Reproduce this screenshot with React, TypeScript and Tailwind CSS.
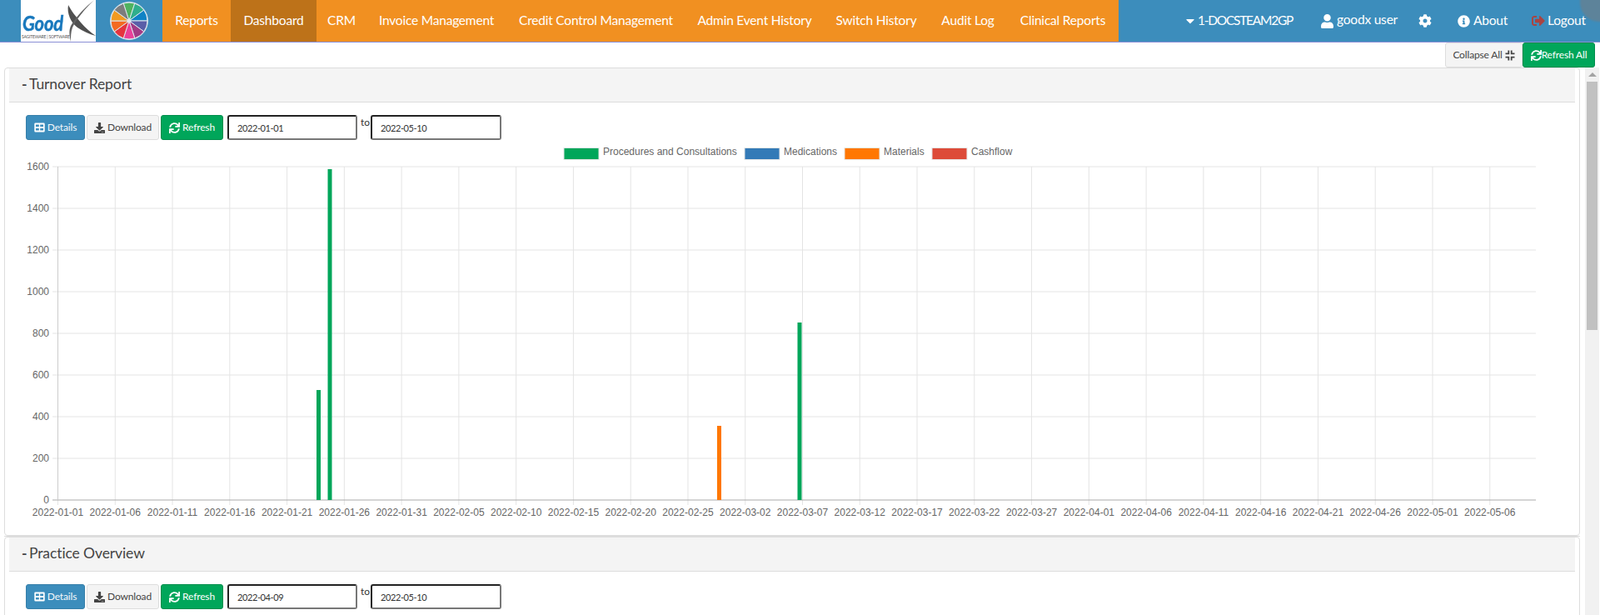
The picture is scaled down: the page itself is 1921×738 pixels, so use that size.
import React from "react";
import { FaCaretDown, FaCog, FaDownload, FaInfoCircle, FaSignOutAlt, FaSync, FaUser } from "react-icons/fa";

const menu: [string, number][] = [
  ["Reports", 82],
  ["Dashboard", 103],
  ["CRM", 60],
  ["Invoice Management", 168],
  ["Credit Control Management", 215],
  ["Admin Event History", 166],
  ["Switch History", 126],
  ["Audit Log", 94],
  ["Clinical Reports", 134],
];

const wheelColors = ["#4fb35f", "#2fae8c", "#0f82c5", "#5a5ea8", "#a23a85", "#e9409a", "#e5343f", "#f36a21", "#f29a21", "#7d7d7d"];

function sector(i: number, cx: number, cy: number, r: number) {
  const a0 = ((i * 36 - 18 - 90) * Math.PI) / 180;
  const a1 = ((i * 36 + 18 - 90) * Math.PI) / 180;
  return `M${cx} ${cy}L${cx + r * Math.cos(a0)} ${cy + r * Math.sin(a0)}A${r} ${r} 0 0 1 ${cx + r * Math.cos(a1)} ${cy + r * Math.sin(a1)}Z`;
}

function Logo() {
  return (
    <div className="relative w-[90px] h-[50px] bg-white overflow-hidden [font-family:'Liberation_Sans',sans-serif]">
      <span className="absolute left-[2px] top-[14px] origin-left scale-x-[0.88] text-[25px] leading-[26px] font-bold italic text-[#1878bd] [-webkit-text-stroke:0.5px_#1878bd]">
        Good
      </span>
      <span className="absolute left-[1px] top-[41px] text-[5px] leading-[6px] whitespace-nowrap text-[#555]">
        SAGITEWARE | SOFTWARE
      </span>
      <svg className="absolute inset-0" width="90" height="50" viewBox="0 0 90 50">
        <path d="M57 6C60 12 66 20 72 27C77 33 84 39 90 43C82 41 74 37 68 33C60 27 55 16 57 6Z" fill="#4f4f4f" />
        <path d="M88 0C77 11 68 21 62 33C60 38 60 44 60 50C59 44 57 38 60 31C67 19 78 8 88 0Z" fill="#5f5f5f" />
      </svg>
    </div>
  );
}

function Wheel() {
  return (
    <svg className="absolute left-[132px] top-[2px]" width="46" height="46" viewBox="0 0 46 46">
      {wheelColors.map((c, i) => (
        <path key={c} d={sector(i, 23, 23, 22)} fill={c} stroke="#dfe7ee" strokeWidth="1" />
      ))}
      <circle cx="23" cy="23" r="2.5" fill="#dfe7ee" />
      <circle cx="23" cy="23" r="22.4" fill="none" stroke="#dfe7ee" strokeWidth="1" />
    </svg>
  );
}

function CollapseIcon() {
  return (
    <svg width="12" height="13" viewBox="0 0 12 13" fill="#444">
      <path d="M3.4 0.5H5.2V5.2H0.5V3.4L3.4 3.4Z" />
      <path d="M6.8 0.5H8.6V3.4L11.5 3.4V5.2H6.8Z" />
      <path d="M3.4 12.5H5.2V7.8H0.5V9.6L3.4 9.6Z" />
      <path d="M6.8 12.5H8.6V9.6L11.5 9.6V7.8H6.8Z" />
    </svg>
  );
}

function GridIcon() {
  return (
    <svg width="13" height="12" viewBox="0 0 13 12">
      <path fillRule="evenodd" fill="#fff" d="M1.5 0.5H11.5A1.2 1.2 0 0 1 12.7 1.7V10.3A1.2 1.2 0 0 1 11.5 11.5H1.5A1.2 1.2 0 0 1 0.3 10.3V1.7A1.2 1.2 0 0 1 1.5 0.5ZM2 2.5V5H5.8V2.5ZM7.2 2.5V5H11V2.5ZM2 7V9.5H5.8V7ZM7.2 7V9.5H11V7Z" />
    </svg>
  );
}

function Toolbar({ from, to }: { from: string; to: string }) {
  const btn = "flex items-center justify-center h-[30px] rounded-[3px] border text-[12px] tracking-[-0.15px] whitespace-nowrap";
  const inp = "block h-[30px] pl-[10px] rounded-[3px] border-2 border-t-[#222] border-l-[#222] border-r-[#777] border-b-[#777] text-[11px] tracking-[-0.4px] text-[#333] bg-white outline-none";
  return (
    <div className="flex ml-[20px] mt-[15px] h-[30px]">
      <div className={`${btn} w-[71px] bg-[#3c8dbc] border-[#367fa9] text-[#f4f8fb] gap-[3px]`}>
        <GridIcon /> Details
      </div>
      <div className={`${btn} w-[87px] ml-[2px] bg-[#f4f4f4] border-[#ddd] text-[#444] gap-[3px]`}>
        <FaDownload className="text-[13px]" /> Download
      </div>
      <div className={`${btn} w-[75px] ml-[2px] bg-[#00a65a] border-[#008d4c] text-white gap-[3px]`}>
        <FaSync className="text-[13px]" /> Refresh
      </div>
      <input readOnly value={from} className={`${inp} w-[156px] ml-[5px]`} />
      <span className="w-[16px] pl-[4px] text-[12px] leading-[18px] text-[#333]">to</span>
      <input readOnly value={to} className={`${inp} w-[157px]`} />
    </div>
  );
}

const dates = ["2022-01-01","2022-01-06","2022-01-11","2022-01-16","2022-01-21","2022-01-26","2022-01-31","2022-02-05","2022-02-10","2022-02-15","2022-02-20","2022-02-25","2022-03-02","2022-03-07","2022-03-12","2022-03-17","2022-03-22","2022-03-27","2022-04-01","2022-04-06","2022-04-11","2022-04-16","2022-04-21","2022-04-26","2022-05-01","2022-05-06"];

const legend: [string, number, number, string][] = [
  ["Procedures and Consultations", 677, 724, "#00a65a"],
  ["Medications", 894, 941, "#337ab7"],
  ["Materials", 1014, 1061, "#ff7701"],
  ["Cashflow", 1119, 1166, "#dd4b39"],
];

const bars: [number, number, string][] = [
  [380, 468, "#00a65a"],
  [393.5, 203, "#00a65a"],
  [861, 511, "#ff7701"],
  [957.5, 387, "#00a65a"],
];

function Chart() {
  const font = { fontFamily: "'Liberation Sans', Arial, sans-serif", fontSize: 12, fill: "#666" };
  return (
    <svg className="block -ml-[11px]" width="1892" height="474" viewBox="0 168 1892 474">
      {legend.map(([t, bx, tx, c]) => (
        <g key={t}>
          <rect x={bx} y={177.5} width={42} height={14} fill={c} stroke="#e6e6e6" strokeWidth="1" />
          <text x={tx} y={186} {...font}>{t}</text>
        </g>
      ))}
      {dates.map((d, i) => {
        const x = 69.5 + i * 68.77;
        return (
          <g key={d}>
            <line x1={x} x2={x} y1={200} y2={606} stroke="#e4e4e4" />
            <text x={x} y={619} textAnchor="middle" {...font}>{d}</text>
          </g>
        );
      })}
      {[1600, 1400, 1200, 1000, 800, 600, 400, 200, 0].map((v, i) => {
        const y = 200 + i * 50;
        return (
          <g key={v}>
            <line x1={63} x2={1844} y1={y} y2={y} stroke={v === 0 ? "#aaa" : "#e4e4e4"} />
            <text x={59} y={y + 4} textAnchor="end" {...font}>{v}</text>
          </g>
        );
      })}
      <line x1={69.5} x2={69.5} y1={200} y2={600} stroke="#ccc" />
      {bars.map(([x, y, c]) => (
        <rect key={x} x={x} y={y} width={5} height={600 - y} fill={c} />
      ))}
    </svg>
  );
}

function Header({ title }: { title: string }) {
  return (
    <div className="flex items-center h-[41px] pl-[15px] pb-[2px] bg-[#f4f4f4] border-b border-[#ddd] text-[17.5px] tracking-[-0.1px] text-[#444]">
      <span className="font-bold w-[9px]">-</span>
      {title}
    </div>
  );
}

export default function App() {
  return (
    <div className="relative w-[1921px] h-[738px] overflow-hidden bg-white [font-family:Lato,sans-serif]">
      <nav className="relative flex h-[51px] bg-[#3c8dbc] border-b border-[#8a8fd6] text-white text-[15.5px] tracking-[-0.2px]">
        <div className="ml-[25px]"><Logo /></div>
        <Wheel />
        <div className="flex ml-[80px] bg-[#f19021]">
          {menu.map(([t, w]) => (
            <div key={t} className={`flex items-center justify-center whitespace-nowrap ${t === "Dashboard" ? "bg-[#bd7219]" : ""}`} style={{ width: w }}>
              {t}
            </div>
          ))}
        </div>
        <div className="flex items-center ml-[78px]">
          <FaCaretDown className="text-[16px]" />
          <span className="ml-[1px] w-[147px] tracking-[-1.25px]">1-DOCSTEAM2GP</span>
          <FaUser className="text-[17px]" />
          <span className="ml-[3px] w-[98px] relative -top-[1px]">goodx user</span>
          <FaCog className="text-[16px]" />
          <FaInfoCircle className="text-[15px] ml-[31px]" />
          <span className="ml-[4px] w-[70px]">About</span>
          <FaSignOutAlt className="text-[16px] text-[#a94442]" />
          <span className="ml-[3px]">Logout</span>
        </div>
        <div className="absolute right-[-22px] top-[-20px] w-[46px] h-[46px] rounded-full bg-[#6b7f8c] opacity-70 blur-[1px]" />
      </nav>

      <div className="flex justify-end h-[30px] pr-[6px] text-[12px] tracking-[-0.15px]">
        <div className="flex items-center justify-center gap-[3px] w-[93px] bg-[#f4f4f4] border border-[#ddd] rounded-[3px] text-[#444]">
          Collapse All <CollapseIcon />
        </div>
        <div className="flex items-center justify-center w-[87px] bg-[#00a65a] border border-[#008d4c] rounded-[3px] text-white">
          <FaSync className="text-[13px]" />Refresh All
        </div>
      </div>

      <div className="flex">
        <div className="ml-[5px] w-[1892px]">
          <section className="h-[562px] px-[5px] border border-[#ddd] rounded-[4px] overflow-hidden">
            <Header title="Turnover Report" />
            <Toolbar from="2022-01-01" to="2022-05-10" />
            <Chart />
          </section>
          <div className="h-[1px] bg-[#ddd]" />
          <section className="h-[200px] px-[5px] border border-[#ddd] rounded-[4px]">
            <Header title="Practice Overview" />
            <Toolbar from="2022-04-09" to="2022-05-10" />
          </section>
        </div>
        <div className="relative ml-[6px] w-[17px] h-[657px] bg-[#f1f1f1]">
          <div className="absolute left-[4px] top-[6px] w-0 h-0 border-x-[5px] border-x-transparent border-b-[5px] border-b-[#a3a3a3]" />
          <div className="absolute left-[2px] top-[17px] w-[13px] h-[298px] bg-[#c1c1c1]" />
        </div>
      </div>
    </div>
  );
}
